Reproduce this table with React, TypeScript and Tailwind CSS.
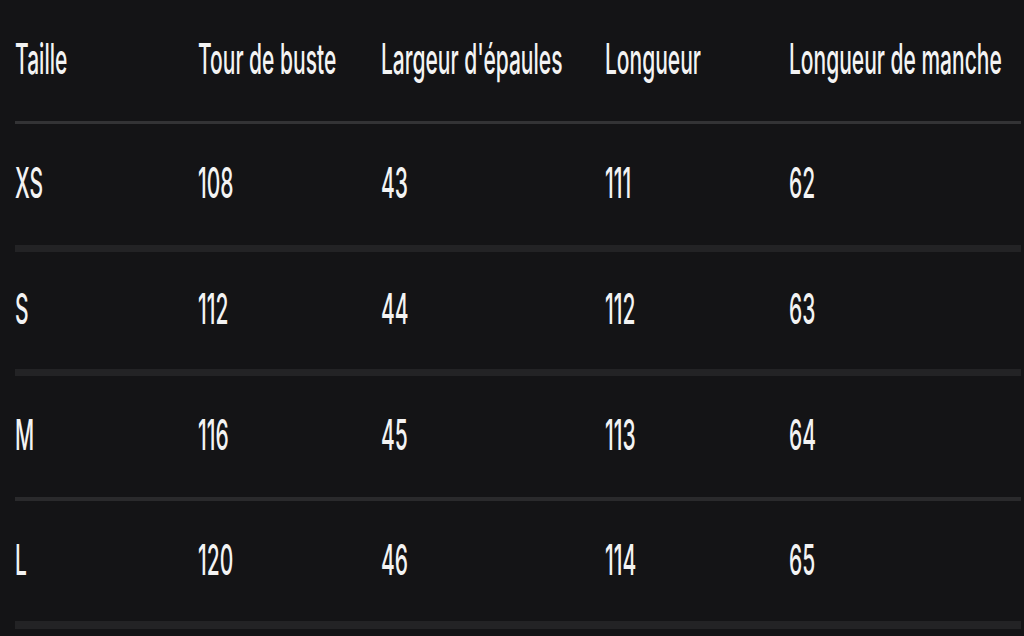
import React from "react";

const headers = ["Taille", "Tour de buste", "Largeur d'épaules", "Longueur", "Longueur de manche"];

const rows: { cells: string[]; h: string; border: string }[] = [
  { cells: ["XS", "108", "43", "111", "62"], h: "h-[121px]", border: "border-b-[7px] border-[#232325]" },
  { cells: ["S", "112", "44", "112", "63"], h: "h-[117px]", border: "border-b-[7px] border-[#232325]" },
  { cells: ["M", "116", "45", "113", "64"], h: "h-[121px]", border: "border-b-[4px] border-[#2a2a2c]" },
  { cells: ["L", "120", "46", "114", "65"], h: "h-[120px]", border: "border-b-[8px] border-[#232325]" },
];

function Cell({ text }: { text: string }) {
  return (
    <div className="flex items-center">
      <span className="inline-block mb-[4px] scale-y-[2] leading-none text-[21px] font-medium text-[#f3f3f3] whitespace-nowrap">
        {text}
      </span>
    </div>
  );
}

export default function App() {
  return (
    <div
      className="w-[1024px] h-[636px] bg-[#141416] overflow-hidden pl-[15px] pr-[3px]"
      style={{ fontFamily: "Inter, Roboto, 'Liberation Sans', sans-serif" }}
    >
      <div className="grid grid-cols-[183px_183px_224px_184px_1fr] h-[121px] border-b-[3px] border-[#333335] box-content">
        {headers.map((h) => (
          <Cell key={h} text={h} />
        ))}
      </div>
      {rows.map((r) => (
        <div
          key={r.cells[0]}
          className={`grid grid-cols-[183px_183px_224px_184px_1fr] box-content ${r.h} ${r.border}`}
        >
          {r.cells.map((c, i) => (
            <Cell key={i} text={c} />
          ))}
        </div>
      ))}
    </div>
  );
}
